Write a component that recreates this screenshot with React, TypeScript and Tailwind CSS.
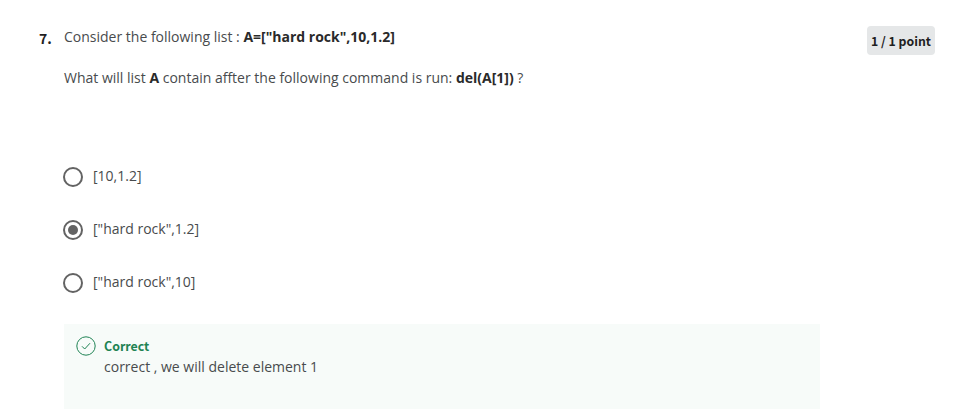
const BODY = "font-['Open_Sans',sans-serif] text-[14px] leading-[20px] text-[#484b4d] whitespace-pre";
const HEADING = "font-['Noto_Sans_CJK_SC','Open_Sans',sans-serif] font-bold leading-[20px] whitespace-pre";

const options = [
  { label: "[10,1.2]", selected: false },
  { label: '["hard rock",1.2]', selected: true },
  { label: '["hard rock",10]', selected: false },
];

function Option({ label, selected }: { label: string; selected: boolean }) {
  return (
    <label className="flex h-[20px] items-center gap-[10px]">
      <span className="mt-[2px] flex size-[20px] shrink-0 items-center justify-center rounded-full border-2 border-[#636363] bg-white">
        {selected && <span className="size-[10px] rounded-full bg-[#636363]" />}
      </span>
      <span className={BODY}>{label}</span>
    </label>
  );
}

function Feedback() {
  return (
    <section className="ml-[64px] mt-[32px] flex h-[85px] w-[756px] bg-[#f7fbf9] pl-[12px] pt-[12px]">
      <svg className="size-[20px] shrink-0" viewBox="0 0 20 20" fill="none" stroke="#1f8354" aria-hidden="true">
        <circle cx="10" cy="10" r="9.2" />
        <path d="M6 10.3 8.7 13 14 7.2" />
      </svg>
      <div className="ml-[8px] flex flex-col gap-px">
        <p className={`${HEADING} text-[12.4px] text-[#1f8354]`}>Correct</p>
        <p className={BODY}>correct , we will delete element 1</p>
      </div>
    </section>
  );
}

export default function App() {
  return (
    <main className="h-[413px] w-[963px] overflow-hidden bg-white pt-[26px]">
      <div className="flex h-[62px] items-start">
        <span className={`${HEADING} ml-[39px] mt-[2px] w-[25px] text-[14px] text-[#1f1f1f]`}>7.</span>
        <div className={`${BODY} mt-px flex w-[803px] flex-col gap-[21px]`}>
          <p>Consider the following list : <strong className="font-bold text-[#2a2a2a]">A=["hard rock",10,1.2]</strong></p>
          <p>What will list <strong className="font-bold text-[#2a2a2a]">A</strong> contain affter the following command is run: <strong className="font-bold text-[#2a2a2a]">del(A[1])</strong> ?</p>
        </div>
        <span className={`${HEADING} flex h-[29px] w-[68px] items-center justify-center rounded-[4px] bg-[#e5e7e8] text-[12.3px] text-[#1f1f1f]`}>1 / 1 point</span>
      </div>
      <div className="ml-[63px] mt-[78px] flex flex-col gap-[33px]">
        {options.map((option) => <Option key={option.label} {...option} />)}
      </div>
      <Feedback />
    </main>
  );
}
